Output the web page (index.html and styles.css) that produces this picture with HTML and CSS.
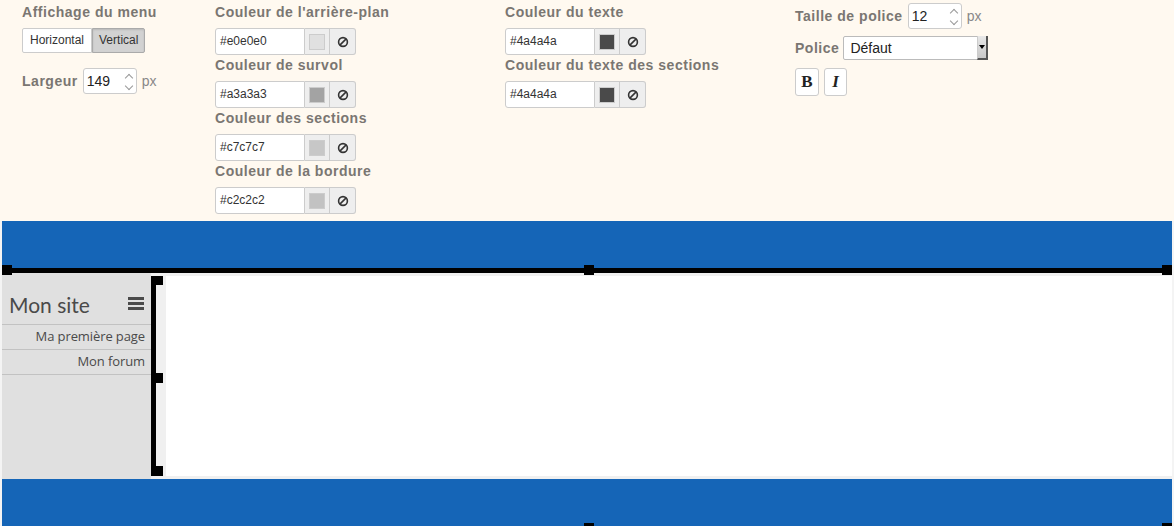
FILE: index.html
```html
<!DOCTYPE html>
<html lang="fr">
<head>
<meta charset="utf-8">
<title>Menu</title>
<link rel="stylesheet" href="styles.css">
</head>
<body>
<div class="panel">
  <div class="col col1">
    <div class="lbl">Affichage du menu</div>
    <div class="btngroup">
      <span class="seg">Horizontal</span><span class="seg active">Vertical</span>
    </div>
    <div class="inline-row width-row">
      <span class="lbl">Largeur</span>
      <span class="num"><span class="val">149</span><span class="spin"><i class="up"></i><i class="down"></i></span></span>
      <span class="unit">px</span>
    </div>
  </div>
  <div class="col col2">
    <div class="lbl">Couleur de l'arrière-plan</div>
    <div class="cgroup"><span class="ctext">#e0e0e0</span><span class="cswatch"><i style="background:#e0e0e0"></i></span><span class="creset"><svg width="12" height="12" viewBox="0 0 12 12"><circle cx="6" cy="6" r="4.4" fill="none" stroke="#333" stroke-width="1.6"/><line x1="2.9" y1="9.1" x2="9.1" y2="2.9" stroke="#333" stroke-width="1.6"/></svg></span></div>
    <div class="lbl">Couleur de survol</div>
    <div class="cgroup"><span class="ctext">#a3a3a3</span><span class="cswatch"><i style="background:#a3a3a3"></i></span><span class="creset"><svg width="12" height="12" viewBox="0 0 12 12"><circle cx="6" cy="6" r="4.4" fill="none" stroke="#333" stroke-width="1.6"/><line x1="2.9" y1="9.1" x2="9.1" y2="2.9" stroke="#333" stroke-width="1.6"/></svg></span></div>
    <div class="lbl">Couleur des sections</div>
    <div class="cgroup"><span class="ctext">#c7c7c7</span><span class="cswatch"><i style="background:#c7c7c7"></i></span><span class="creset"><svg width="12" height="12" viewBox="0 0 12 12"><circle cx="6" cy="6" r="4.4" fill="none" stroke="#333" stroke-width="1.6"/><line x1="2.9" y1="9.1" x2="9.1" y2="2.9" stroke="#333" stroke-width="1.6"/></svg></span></div>
    <div class="lbl">Couleur de la bordure</div>
    <div class="cgroup"><span class="ctext">#c2c2c2</span><span class="cswatch"><i style="background:#c2c2c2"></i></span><span class="creset"><svg width="12" height="12" viewBox="0 0 12 12"><circle cx="6" cy="6" r="4.4" fill="none" stroke="#333" stroke-width="1.6"/><line x1="2.9" y1="9.1" x2="9.1" y2="2.9" stroke="#333" stroke-width="1.6"/></svg></span></div>
  </div>
  <div class="col col3">
    <div class="lbl">Couleur du texte</div>
    <div class="cgroup"><span class="ctext">#4a4a4a</span><span class="cswatch"><i style="background:#4a4a4a"></i></span><span class="creset"><svg width="12" height="12" viewBox="0 0 12 12"><circle cx="6" cy="6" r="4.4" fill="none" stroke="#333" stroke-width="1.6"/><line x1="2.9" y1="9.1" x2="9.1" y2="2.9" stroke="#333" stroke-width="1.6"/></svg></span></div>
    <div class="lbl">Couleur du texte des sections</div>
    <div class="cgroup"><span class="ctext">#4a4a4a</span><span class="cswatch"><i style="background:#4a4a4a"></i></span><span class="creset"><svg width="12" height="12" viewBox="0 0 12 12"><circle cx="6" cy="6" r="4.4" fill="none" stroke="#333" stroke-width="1.6"/><line x1="2.9" y1="9.1" x2="9.1" y2="2.9" stroke="#333" stroke-width="1.6"/></svg></span></div>
  </div>
  <div class="col col4">
    <div class="inline-row size-row">
      <span class="lbl">Taille de police</span>
      <span class="num"><span class="val">12</span><span class="spin"><i class="up"></i><i class="down"></i></span></span>
      <span class="unit">px</span>
    </div>
    <div class="inline-row font-row">
      <span class="lbl">Police</span>
      <span class="select"><span class="sval">Défaut</span><span class="sarrow"></span></span>
    </div>
    <div class="styles-row">
      <span class="sbtn bold">B</span><span class="sbtn ital">I</span>
    </div>
  </div>
</div>

<div class="preview">
  <div class="bar">
    <div class="hline">
      <span class="handle h-left"></span><span class="handle h-mid"></span><span class="handle h-right"></span>
    </div>
  </div>
  <div class="row">
    <div class="sidebar">
      <div class="title"><span>Mon site</span>
        <svg class="burger" width="16" height="13" viewBox="0 0 16 13"><rect x="0" y="0" width="16" height="3" fill="#4a4a4a"/><rect x="0" y="5" width="16" height="3" fill="#4a4a4a"/><rect x="0" y="10" width="16" height="3" fill="#4a4a4a"/></svg>
      </div>
      <div class="item">Ma première page</div>
      <div class="item">Mon forum</div>
      <div class="item-end"></div>
    </div>
    <div class="stage">
      <div class="vbar">
        <span class="vh vh-top"></span><span class="vh vh-mid"></span><span class="vh vh-bot"></span>
      </div>
      <div class="canvas"></div>
    </div>
  </div>
  <div class="bar foot">
    <span class="handle fh-mid"></span><span class="handle fh-right"></span>
  </div>
</div>
</body>
</html>
```

FILE: styles.css
```css
html, body {
  margin: 0;
  padding: 0;
  background: #f4f4f4;
  overflow: hidden;
}
body {
  width: 1174px;
  height: 526px;
  font-family: "Liberation Sans", Arial, sans-serif;
}
.panel {
  background: #fff9f0;
  height: 221px;
  box-sizing: border-box;
  display: flex;
  padding-left: 22px;
}
.col {
  display: flex;
  flex-direction: column;
  align-items: flex-start;
}
.col1 { width: 193px; padding-top: 2px; }
.col2 { width: 290px; padding-top: 2px; }
.col3 { width: 290px; padding-top: 2px; }
.col4 { padding-top: 3px; }

.lbl {
  font-size: 14px;
  font-weight: bold;
  color: #7a7672;
  letter-spacing: 0.52px;
  line-height: 20px;
  height: 18px;
  white-space: nowrap;
}
.col2 > .lbl, .col3 > .lbl, .col1 > .lbl { margin-bottom: 8px; }

.btngroup { display: flex; height: 25px; }
.seg {
  font-size: 12px;
  color: #333;
  line-height: 23px;
  padding: 0 7px;
  border: 1px solid #ccc;
  background: #fff;
}
.seg:first-child { border-radius: 2px 0 0 2px; }
.seg.active {
  background: #d2d2d2;
  border-color: #aaa;
  border-radius: 0 2px 2px 0;
  padding: 0 6px;
  box-shadow: inset 0 1px 2px rgba(0,0,0,0.12);
}

.inline-row { display: flex; align-items: center; }
.inline-row .lbl { margin-right: 5px; line-height: 18px; }
.width-row { margin-top: 15px; }
.num {
  display: flex;
  align-items: center;
  justify-content: space-between;
  width: 54px;
  height: 26px;
  box-sizing: border-box;
  border: 1px solid #ccc;
  border-radius: 3px;
  background: #fff;
  padding: 0 3px 0 3px;
}
.num .val { font-size: 14px; color: #222; }
.spin {
  display: flex;
  flex-direction: column;
  gap: 5px;
  width: 8px;
  padding-right: 1px;
}
.spin i {
  display: block;
  width: 5px;
  height: 5px;
  border-left: 1px solid #999;
  border-top: 1px solid #999;
  margin-left: 2px;
}
.spin .up { transform: rotate(45deg); margin-top: 2px; }
.spin .down { transform: rotate(225deg); margin-top: -3px; }
.unit { font-size: 14px; color: #888; margin-left: 5px; }

.cgroup { display: flex; height: 27px; }
.ctext {
  width: 90px;
  box-sizing: border-box;
  border: 1px solid #ccc;
  border-radius: 3px 0 0 3px;
  background: #fff;
  font-size: 12px;
  color: #333;
  line-height: 25px;
  padding-left: 4px;
}
.cswatch, .creset {
  display: flex;
  align-items: center;
  justify-content: center;
  box-sizing: border-box;
  height: 27px;
  background: #eee;
  border: 1px solid #ccc;
  border-left: none;
}
.cswatch { width: 25px; }
.cswatch i {
  display: block;
  width: 16px;
  height: 16px;
  box-sizing: border-box;
  border: 1px solid #ccc;
}
.creset { width: 26px; border-radius: 0 3px 3px 0; }

.size-row { height: 26px; }
.font-row { margin-top: 7px; height: 24px; }
.select {
  display: flex;
  align-items: stretch;
  justify-content: space-between;
  width: 145px;
  height: 24px;
  box-sizing: border-box;
  border: 1px solid #bbb;
  border-radius: 2px;
  background: #fff;
  margin-left: -1px;
}
.sval { font-size: 14px; color: #222; line-height: 22px; padding-left: 6px; }
.sarrow {
  width: 8px;
  background: linear-gradient(#e8e8e8, #c8c8c8);
  border-left: 1px solid #ccc;
  border-right: 2px solid #555;
  border-bottom: 2px solid #555;
  margin: -1px -1px -1px 0;
  position: relative;
}
.sarrow::after {
  content: "";
  position: absolute;
  left: 1px;
  top: 9px;
  border-left: 3px solid transparent;
  border-right: 3px solid transparent;
  border-top: 4px solid #000;
}
.styles-row { display: flex; gap: 5px; margin-top: 8px; }
.sbtn {
  width: 24px;
  height: 28px;
  box-sizing: border-box;
  border: 1px solid #ccc;
  border-radius: 3px;
  background: #fff;
  font-family: "Liberation Serif", "Times New Roman", serif;
  font-size: 17px;
  font-weight: bold;
  color: #222;
  text-align: center;
  line-height: 26px;
}
.sbtn.ital { font-style: italic; width: 23px; }

.preview { padding: 0 2px; }
.bar {
  background: #1565b7;
  height: 47px;
  position: relative;
}
.hline {
  position: absolute;
  left: 0;
  right: 0;
  top: 47px;
  height: 5px;
  background: #000;
  z-index: 2;
}
.handle {
  position: absolute;
  width: 10px;
  height: 10px;
  background: #000;
}
.hline .handle { top: -3px; }
.h-left { left: 0; }
.h-mid { left: 582px; }
.h-right { right: 0; }

.row {
  display: flex;
  margin-top: 5px;
  height: 206px;
}
.sidebar {
  width: 149px;
  background: #e0e0e0;
  color: #4a4a4a;
  font-family: "Open Sans", "DejaVu Sans", sans-serif;
}
.title {
  height: 51px;
  box-sizing: border-box;
  display: flex;
  align-items: center;
  justify-content: space-between;
  padding: 11px 7px 0 7px;
  font-family: "Lato", "DejaVu Sans", sans-serif;
  font-size: 21px;
}
.burger { margin-top: -1px; }
.item {
  height: 25px;
  box-sizing: border-box;
  border-top: 1px solid #c2c2c2;
  text-align: right;
  padding-right: 6px;
  font-size: 13px;
  letter-spacing: -0.1px;
  line-height: 23px;
}
.item-end { border-top: 1px solid #c2c2c2; }
.stage {
  flex: 1;
  background: #f0f0f0;
  padding: 3px 0;
  display: flex;
}
.vbar {
  width: 5px;
  background: #000;
  position: relative;
}
.vh {
  position: absolute;
  left: 0;
  width: 12px;
  height: 10px;
  background: #000;
}
.vh-top { top: 0; height: 9px; }
.vh-mid { top: 97px; }
.vh-bot { bottom: 0; }
.canvas {
  flex: 1;
  margin-left: 10px;
  background: #fff;
}
.foot .handle { top: 44px; }
.fh-mid { left: 582px; }
.fh-right { right: 0; }
```
